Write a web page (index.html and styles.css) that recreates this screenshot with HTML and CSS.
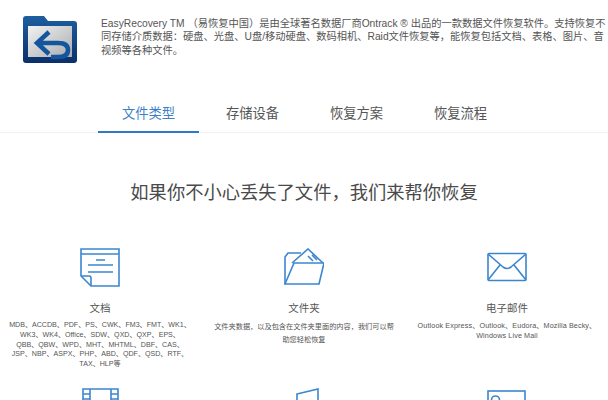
FILE: index.html
```html
<!DOCTYPE html>
<html lang="zh-CN">
<head>
    <meta charset="UTF-8">
    <meta name="viewport" content="width=device-width, initial-scale=1.0">
    <title>EasyRecovery</title>
    <link rel="stylesheet" href="styles.css">
</head>
<body>
    <div class="intro">
        <svg class="logo" width="54" height="47" viewBox="0 0 54 47">
            <defs>
                <linearGradient id="logoFill" x1="0" y1="0" x2="1" y2="1">
                    <stop offset="0" stop-color="#f2f2f2"/>
                    <stop offset="1" stop-color="#a9acb0"/>
                </linearGradient>
                <linearGradient id="logoEdge" x1="0" y1="0" x2="0" y2="1">
                    <stop offset="0" stop-color="#1d5f9f"/>
                    <stop offset="1" stop-color="#0b2f6b"/>
                </linearGradient>
            </defs>
            <path d="M3 0H21L25 5H51Q54 5 54 8V44Q54 47 51 47H3Q0 47 0 44V3Q0 0 3 0Z" fill="url(#logoEdge)"/>
            <path d="M5 10H49V41H5Z" fill="url(#logoFill)"/>
            <path d="M26 16L14 27L26 38M15 27H35Q45 27 45 34Q45 41 35 41H28" fill="none" stroke="#14569e" stroke-width="4.5"/>
        </svg>
        <p class="intro-text">EasyRecovery TM （易恢复中国）是由全球著名数据厂商Ontrack ® 出品的一款数据文件恢复软件。支持恢复不同存储介质数据：硬盘、光盘、U盘/移动硬盘、数码相机、Raid文件恢复等，能恢复包括文档、表格、图片、音视频等各种文件。</p>
    </div>

    <div class="tabs">
        <div class="tab active">文件类型</div>
        <div class="tab">存储设备</div>
        <div class="tab">恢复方案</div>
        <div class="tab">恢复流程</div>
    </div>

    <h2 class="headline">如果你不小心丢失了文件，我们来帮你恢复</h2>

    <div class="types">
        <div class="type">
            <svg class="type-icon" width="40" height="40" viewBox="0 0 40 40">
                <path d="M1 1H39V38H11L1 28Z"/>
                <path d="M1 6H39M16 12H25M8 17H33M8 24H33M1 28H9Q11 28 11 30V38"/>
            </svg>
            <div class="type-name">文档</div>
            <p class="type-desc">MDB、ACCDB、PDF、PS、CWK、FM3、FMT、WK1、<br>WK3、WK4、Office、SDW、QXD、QXP、EPS、<br>QBB、QBW、WPD、MHT、MHTML、DBF、CAS、<br>JSP、NBP、ASPX、PHP、ABD、QDF、QSD、RTF、<br>TAX、HLP等</p>
        </div>
        <div class="type">
            <svg class="type-icon" width="40" height="40" viewBox="0 0 40 40">
                <path d="M1 36L10 15H40L35 36Z"/>
                <path d="M1 36V9L4 5H17"/>
                <path d="M8 15L24 1L39 15M24 8L29 13M28 7L33 12"/>
            </svg>
            <div class="type-name">文件夹</div>
            <p class="type-desc loose">文件夹数据，以及包含在文件夹里面的内容，我们可以帮<br>助您轻松恢复</p>
        </div>
        <div class="type">
            <svg class="type-icon" width="40" height="40" viewBox="0 0 40 40">
                <rect x="1" y="5.5" width="38" height="27" rx="1"/>
                <path d="M1 6L16 19Q20 22 24 19L39 6M1 32L13 17M39 32L27 17"/>
            </svg>
            <div class="type-name">电子邮件</div>
            <p class="type-desc wide">Outlook Express、Outlook、Eudora、Mozilla Becky、<br>Windows Live Mail</p>
        </div>
        <div class="type">
            <svg class="type-icon" width="40" height="40" viewBox="0 0 40 40">
                <path d="M3 1H38V39H3ZM10 1V39M31 1V39M3 6H10M31 6H38M3 11H10M31 11H38"/>
            </svg>
        </div>
        <div class="type">
            <svg class="type-icon" width="40" height="40" viewBox="0 0 40 40">
                <path d="M13 6L34 1V30L13 36Z"/>
            </svg>
        </div>
        <div class="type">
            <svg class="type-icon" width="40" height="40" viewBox="0 0 40 40">
                <rect x="1" y="3" width="37" height="33"/>
                <circle cx="8.5" cy="12" r="4"/>
            </svg>
        </div>
    </div>
</body>
</html>
```

FILE: styles.css
```css
html, body {
    margin: 0;
    height: 400px;
    overflow: hidden;
}
body {
    font-family: "Liberation Sans", "Noto Sans CJK SC", sans-serif;
    background: #fff;
    color: #555;
}
.intro {
    display: flex;
    gap: 24px;
    padding: 16px 0 0 23px;
    box-sizing: border-box;
    height: 98px;
}
.logo {
    flex: none;
}
.intro-text {
    margin: 1px 0 0;
    width: 507px;
    flex: none;
    font-size: 10.25px;
    line-height: 13.3px;
    color: #555;
}
.tabs {
    display: flex;
    gap: 3px;
    padding-left: 98px;
    height: 34px;
    border-bottom: 1px solid #f1f1f1;
}
.tab {
    width: 101px;
    height: 33px;
    line-height: 31px;
    text-align: center;
    font-size: 13.3px;
    color: #555;
}
.tab.active {
    color: #3d7fc7;
    border-bottom: 2px solid #2f7ac6;
}
.headline {
    margin: 47px 0 0;
    text-align: center;
    font-size: 18.3px;
    line-height: 26px;
    font-weight: normal;
    color: #4a4a4a;
}
.types {
    display: grid;
    grid-template-columns: 200px 208px 198px;
    padding-top: 42px;
}
.type {
    height: 140px;
    text-align: center;
}
.type-icon {
    display: block;
    margin: 0 auto;
    fill: none;
    stroke: #3b86d0;
    stroke-width: 1.6;
}
.type-name {
    margin-top: 13px;
    font-size: 10.5px;
    line-height: 14px;
    color: #555;
}
.type-desc {
    margin: 6px 0 0;
    font-size: 7.1px;
    line-height: 9.8px;
    color: #555;
}
.type-desc.loose {
    font-size: 7.2px;
    line-height: 12.6px;
}
.type-desc.wide {
    font-size: 7.2px;
    letter-spacing: 0.12px;
}
```
